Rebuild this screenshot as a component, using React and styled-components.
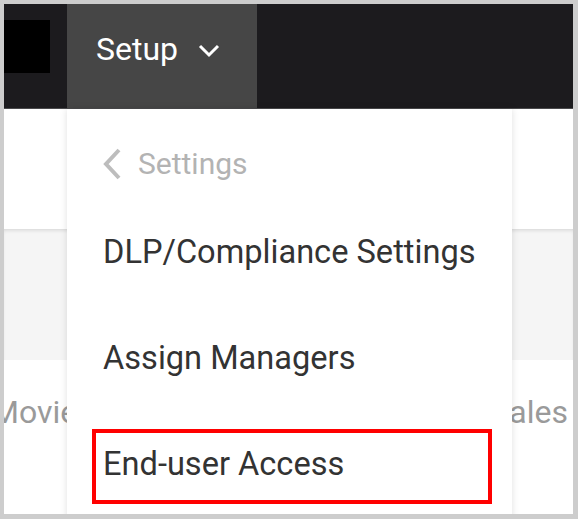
import styled, { createGlobalStyle } from 'styled-components'

const GlobalStyle = createGlobalStyle`
  body {
    margin: 0;
    background: #fff;
    font-family: Roboto, 'Noto Sans', sans-serif;
  }
`

const ChevronDown = () => (
  <svg width="24" height="14" viewBox="0 0 24 14">
    <polyline points="3,2 12,11 21,2" fill="none" stroke="#fff" strokeWidth="3" />
  </svg>
)

const ChevronLeft = () => (
  <svg width="20" height="32" viewBox="0 0 20 32">
    <polyline points="17,2 4,16 17,30" fill="none" stroke="#bdbdbd" strokeWidth="4" />
  </svg>
)

const menuItems = [
  { label: 'DLP/Compliance Settings' },
  { label: 'Assign Managers' },
  { label: 'End-user Access', highlighted: true },
]

export default function App() {
  return (
    <>
      <GlobalStyle />
      <Frame>
        <NavBar>
          <LogoBlock />
          <NavButton>
            <NavLabel>Setup</NavLabel>
            <Caret>
              <ChevronDown />
            </Caret>
          </NavButton>
        </NavBar>

        <TopPanel />
        <Band />
        <TabRow>
          <TabLabel>Movies</TabLabel>
          <TabLabel>Sales</TabLabel>
        </TabRow>

        <Dropdown>
          <BackRow>
            <ChevronLeft />
            <BackLabel>Settings</BackLabel>
          </BackRow>
          {menuItems.map((item) => (
            <MenuItem key={item.label} highlighted={item.highlighted}>
              {item.label}
            </MenuItem>
          ))}
        </Dropdown>
      </Frame>
    </>
  )
}

const Frame = styled.div`
  position: relative;
  width: 578px;
  height: 519px;
  box-sizing: border-box;
  border-style: solid;
  border-color: #cdcdcd;
  border-width: 4px 5px 5px 4px;
  overflow: hidden;
  background: #fff;
`

const NavBar = styled.div`
  display: flex;
  align-items: flex-start;
  gap: 17px;
  height: 105px;
  box-sizing: border-box;
  background: #1c1b1e;
  border-bottom: 1px solid #4a4a4c;
`

const LogoBlock = styled.div`
  width: 46px;
  height: 53px;
  margin-top: 16px;
  background: #000;
`

const NavButton = styled.div`
  display: flex;
  align-items: flex-start;
  width: 190px;
  height: 104px;
  box-sizing: border-box;
  padding: 25px 0 0 29px;
  background: #464646;
`

const NavLabel = styled.span`
  font-size: 32px;
  line-height: 40px;
  color: #fff;
`

const Caret = styled.span`
  display: flex;
  margin: 15px 0 0 19px;
`

const TopPanel = styled.div`
  height: 120px;
  background: #fff;
`

const Band = styled.div`
  height: 131px;
  background: #f5f5f5;
  box-shadow: inset 0 3px 4px -2px rgba(0, 0, 0, 0.14);
`

const TabRow = styled.div`
  display: flex;
  justify-content: space-between;
  padding: 32px 5px 0 0;
  margin-left: -13px;
`

const TabLabel = styled.span`
  font-size: 32px;
  line-height: 40px;
  color: #9a9a9a;
`

const Dropdown = styled.div`
  position: absolute;
  left: 63px;
  top: 105px;
  width: 445px;
  height: 420px;
  box-sizing: border-box;
  padding-top: 35px;
  display: flex;
  flex-direction: column;
  gap: 31px;
  background: #fff;
  box-shadow: 0 0 7px rgba(0, 0, 0, 0.13);
`

const BackRow = styled.div`
  display: flex;
  align-items: center;
  gap: 16px;
  height: 40px;
  margin-bottom: 2px;
  padding-left: 35px;
`

const BackLabel = styled.span`
  font-size: 30px;
  line-height: 40px;
  color: #b3b3b3;
`

const MenuItem = styled.div`
  display: flex;
  align-items: center;
  height: 75px;
  margin: 0 20px 0 25px;
  padding: 0 0 6px 7px;
  box-sizing: border-box;
  border: 4px solid ${({ highlighted }) => (highlighted ? '#ff0000' : 'transparent')};
  font-size: 32.6px;
  line-height: 40px;
  color: #333;
  white-space: nowrap;
`
